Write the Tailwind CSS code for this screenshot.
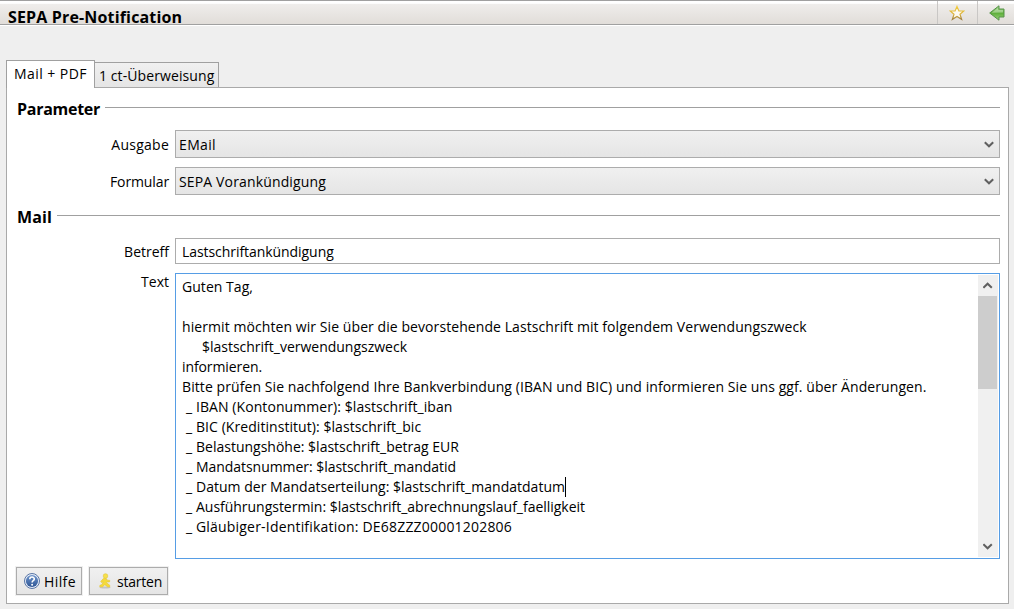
<!DOCTYPE html>
<html lang="de"><head><meta charset="utf-8"><title>SEPA Pre-Notification</title>
<script src="https://cdn.jsdelivr.net/npm/@tailwindcss/browser@4"></script></head>
<body class="h-[609px] w-[1014px] overflow-hidden bg-[#efefef] font-['Open_Sans','Noto_Sans',sans-serif] text-[14px] leading-5 text-black">
<header class="flex h-[26px] border-t border-b border-t-[#a0a0a0] border-b-white bg-[#f4f2f0]">
  <div class="flex h-6 w-full border-b border-[#a0a0a0] bg-linear-to-b from-white from-10% via-[#efedeb] via-15% to-[#e1ddd9]">
    <h1 class="flex-1 pt-[6px] pl-2 text-[16px] leading-5 font-bold tracking-[0.16px] whitespace-nowrap">SEPA Pre-Notification</h1>
    <div class="flex w-10 items-center justify-center border-l border-[#c9c7c5] pr-px pt-px">
      <svg class="h-4 w-4" viewBox="0 0 16 16"><defs><linearGradient id="star" x2="0" y2="1"><stop stop-color="#f2cc3c"/><stop offset=".6" stop-color="#dcb43c"/><stop offset="1" stop-color="#a08040"/></linearGradient></defs><path d="M8 1.400 9.900 6h5l-3.900 3.300 1.600 5L8 11.400l-4.600 2.900 1.600-5L1.100 6h5z" fill="#fdfaf0" stroke="url(#star)" stroke-width="1.200"/></svg>
    </div>
    <div class="flex w-[37px] items-center justify-center border-l border-[#c9c7c5] pl-[2px]">
      <svg class="h-4 w-4" viewBox="0 0 16 16"><defs><linearGradient id="arrow" x2="0" y2="1"><stop stop-color="#a8d890"/><stop offset=".5" stop-color="#5cae38"/><stop offset="1" stop-color="#9cd47c"/></linearGradient></defs><path d="M.7 8 10 .8V4h5v8h-5v3.200z" fill="url(#arrow)" stroke="#56924a"/><path d="M2.600 7.800 9 2.900V5h5v2.500z" fill="#fff" fill-opacity=".35"/></svg>
    </div>
  </div>
</header>
<main class="pt-[34px] pr-[5px] pl-[6px]">
  <nav class="flex h-[27px] items-end">
    <div class="relative z-10 -mb-px flex h-7 w-[89px] shrink-0 border border-b-0 border-[#a0a0a0] bg-white pt-[3px] pl-[7px] tracking-[0.45px] whitespace-nowrap">Mail + PDF</div>
    <div class="flex h-[25px] w-[124px] border border-b-0 border-l-0 border-[#a0a0a0] bg-linear-to-b from-[#f0f0f0] to-[#e5e5e5] pt-[3px] pl-[4px] tracking-[0.09px] whitespace-nowrap">1 ct-Überweisung</div>
  </nav>
  <section class="h-[517px] border border-[#a9a9a9] bg-white pr-2 pl-[9px]">
    <div class="flex h-[42px] items-start pt-[11px]"><h2 class="ml-px w-[88px] shrink-0 text-[16px] leading-5 font-bold tracking-[-0.27px]">Parameter</h2><hr class="mt-2 flex-1 border-[#a0a0a0]"></div>
    <div class="flex h-[37px]"><label class="w-[159px] shrink-0 pt-[5px] pr-[6px] text-right tracking-[0.25px]">Ausgabe</label>
      <div class="flex h-7 flex-1 items-center justify-between border border-[#acacac] bg-linear-to-b from-[#f0f0f0] to-[#e5e5e5] pr-[5px] pl-[3px]"><span class="pt-[2px] tracking-[0.356px]">EMail</span><svg class="h-[7px] w-[10px]" viewBox="0 0 10 7"><path d="M.8 1.200 5 5.300 9.200 1.200" fill="none" stroke="#606060" stroke-width="2"/></svg></div></div>
    <div class="flex h-[37px]"><label class="w-[159px] shrink-0 pt-[5px] pr-[6px] text-right tracking-[-0.119px]">Formular</label>
      <div class="flex h-7 flex-1 items-center justify-between border border-[#acacac] bg-linear-to-b from-[#f0f0f0] to-[#e5e5e5] pr-[5px] pl-[3px]"><span class="pt-[2px] tracking-[0.146px]">SEPA Vorankündigung</span><svg class="h-[7px] w-[10px]" viewBox="0 0 10 7"><path d="M.8 1.200 5 5.300 9.200 1.200" fill="none" stroke="#606060" stroke-width="2"/></svg></div></div>
    <div class="flex h-[34px] items-start pt-[3px]"><h2 class="ml-px w-[40px] shrink-0 text-[16px] leading-5 font-bold tracking-[0.1px]">Mail</h2><hr class="mt-2 flex-1 border-[#a0a0a0]"></div>
    <div class="flex h-[35px]"><label class="w-[159px] shrink-0 pt-1 pr-[6px] text-right">Betreff</label>
      <div class="flex h-[26px] flex-1 items-center border border-[#acacac] pl-[6px]"><span class="pt-[2px] tracking-[-0.06px]">Lastschriftankündigung</span></div></div>
    <div class="flex h-[286px]"><label class="-mt-px w-[159px] shrink-0 pr-[6px] text-right">Text</label>
      <div class="flex flex-1 border border-[#569de5] py-px pr-px pl-[6px]">
        <div class="flex-1 pt-[2px] whitespace-nowrap">
          <p class="h-5 tracking-[0.045px]">Guten Tag,</p>
          <p class="h-5"></p>
          <p class="h-5 tracking-[0.075px]">hiermit möchten wir Sie über die bevorstehende Lastschrift mit folgendem Verwendungszweck</p>
          <p class="h-5 pl-5 tracking-[-0.009px]">$lastschrift_verwendungszweck</p>
          <p class="h-5 tracking-[-0.098px]">informieren.</p>
          <p class="h-5 tracking-[0.082px]">Bitte prüfen Sie nachfolgend Ihre Bankverbindung (IBAN und BIC) und informieren Sie uns ggf. über Änderungen.</p>
          <p class="flex h-5 pl-1 tracking-[0.075px]"><span class="w-[10px]">_</span>IBAN (Kontonummer): $lastschrift_iban</p>
          <p class="flex h-5 pl-1 tracking-[0.06px]"><span class="w-[10px]">_</span>BIC (Kreditinstitut): $lastschrift_bic</p>
          <p class="flex h-5 pl-1"><span class="w-[10px]">_</span>Belastungshöhe: $lastschrift_betrag EUR</p>
          <p class="flex h-5 pl-1 tracking-[-0.049px]"><span class="w-[10px]">_</span>Mandatsnummer: $lastschrift_mandatid</p>
          <p class="flex h-5 pl-1 tracking-[0.019px]"><span class="w-[10px]">_</span>Datum der Mandatserteilung: $lastschrift_mandatdatum<i class="h-5 w-px bg-black"></i></p>
          <p class="flex h-5 pl-1 tracking-[-0.025px]"><span class="w-[10px]">_</span>Ausführungstermin: $lastschrift_abrechnungslauf_faelligkeit</p>
          <p class="flex h-5 pl-1 tracking-[0.191px]"><span class="w-[10px]">_</span>Gläubiger-Identifikation: DE68ZZZ00001202806</p>
        </div>
        <div class="flex w-5 flex-col bg-[#f0f0f0]">
          <div class="flex h-[21px] items-center pl-[5px]"><svg class="h-[7px] w-[10px]" viewBox="0 0 10 7"><path d="M.4 5.800 4.600 1.700 8.800 5.800" fill="none" stroke="#606060" stroke-width="2"/></svg></div>
          <div class="h-[93px] w-[19px] bg-[#cdcdcd]"></div>
          <div class="mt-auto flex h-[21px] items-center pl-[5px]"><svg class="h-[7px] w-[10px]" viewBox="0 0 10 7"><path d="M.4 1.200 4.600 5.300 8.800 1.200" fill="none" stroke="#606060" stroke-width="2"/></svg></div>
        </div>
      </div></div>
    <div class="flex gap-[7px] pt-2">
      <button class="flex h-7 w-[66px] items-center border border-[#acacac] bg-linear-to-b from-[#f0f0f0] to-[#e5e5e5] pl-[7px] shadow-[0_0_0_1px_#f0f0f0]">
        <svg class="mr-1 h-4 w-4" viewBox="0 0 16 16"><defs><linearGradient id="help" x2="0" y2="1"><stop stop-color="#7096cc"/><stop offset="1" stop-color="#2c5494"/></linearGradient></defs><circle cx="8" cy="8" r="7.500" fill="#e8eef8" stroke="#48689c" stroke-width=".9"/><circle cx="8" cy="8" r="6.100" fill="url(#help)"/><path d="M5.800 6.200C5.800 3.300 10.300 3.400 10.300 6c0 1.700-2.200 1.700-2.200 3.500" fill="none" stroke="#fff" stroke-width="1.600"/><circle cx="8.100" cy="11.700" r="1" fill="#fff"/></svg>
        <span class="pt-[2px] tracking-[0.4px]">Hilfe</span></button>
      <button class="flex h-7 w-[79px] items-center border border-[#acacac] bg-linear-to-b from-[#f0f0f0] to-[#e5e5e5] pl-[7px] shadow-[0_0_0_1px_#f0f0f0]">
        <svg class="mr-1 h-4 w-4" viewBox="0 0 16 16"><ellipse cx="8" cy="14.500" rx="5.500" ry="1" fill="#c4c4c4"/><circle cx="8.500" cy="3" r="2.300" fill="#f6e04c" stroke="#e4c838" stroke-width=".6"/><path d="M6.300 5.600 9.300 5.500 10.300 7.200 12.800 7.400 12.600 8.900 9.800 9 9.500 9.700 12.800 12.300 12.700 14 10.700 13.900 7.800 11.700 5.500 13.900 2.700 13.800 2.900 12.300 5 11.600 6.200 8.800 4.500 9.600 3.700 8.500z" fill="#f4da3c" stroke="#e4c434" stroke-width=".6"/></svg>
        <span class="pt-[2px] tracking-[-0.229px]">starten</span></button>
    </div>
  </section>
</main>
</body></html>
